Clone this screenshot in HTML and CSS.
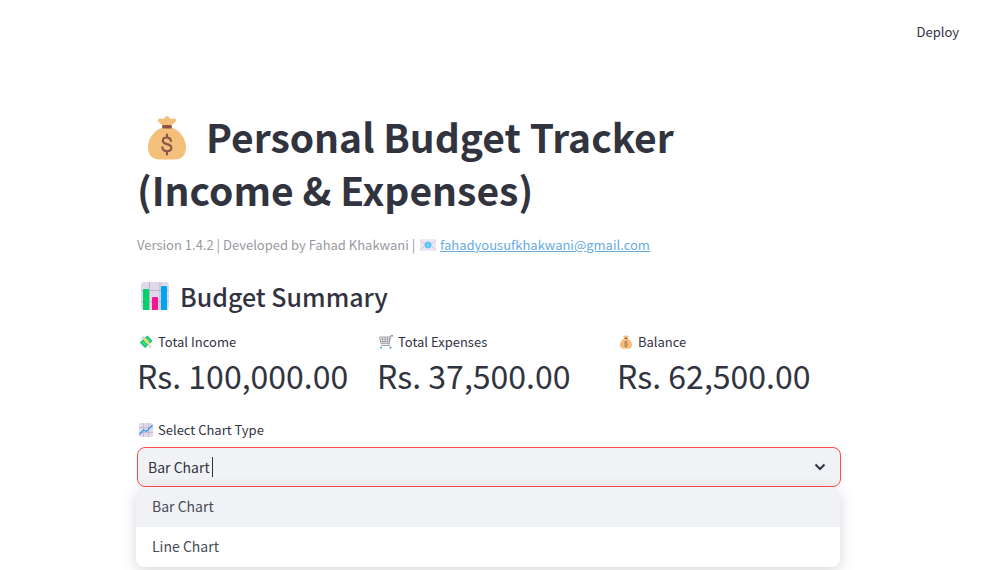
FILE: index.html
```html
<!DOCTYPE html>
<html lang="en">
<head>
<meta charset="utf-8">
<meta name="viewport" content="width=device-width, initial-scale=1">
<title>Personal Budget Tracker</title>
<link rel="stylesheet" href="styles.css">
</head>
<body>
<svg class="sprite" aria-hidden="true">
  <symbol id="money-bag" viewBox="0 0 38 44">
    <path fill="#f3bf7b" d="M15 10 12 7C9.500 6 9 3 11.500 2.500c1.500-.4 2.500.6 3.500.5 1.500 0 2-3 4-3s2.500 3 4 3c1 .1 2-.9 3.500-.5C29 3 28.500 6 26 7l-3 3zM13.500 12h11C31 14 38 22 38 31c0 8-4 12.500-12 12.500H12C4 43.500 0 39 0 31c0-9 7-17 13.500-19z"/>
    <rect x="14" y="9" width="10" height="3.500" rx="1.500" fill="#8b5748"/>
    <path d="M23 25c-.5-2.500-2-3.500-4.200-3.500-2.500 0-4 1.200-4 3.200 0 4.800 8.500 2 8.500 7 0 2.200-1.800 3.500-4.500 3.500s-4.300-1.500-4.500-4M19 18.500v3M19 35v3.500" fill="none" stroke="#8b5748" stroke-width="2.100" stroke-linecap="round"/>
  </symbol>
  <symbol id="bars" viewBox="0 0 28 28">
    <rect width="28" height="28" rx="3" fill="#e1d8ec"/>
    <path d="M0 8.500h28M0 19.500h28M8.500 0v28M19 0v28" stroke="#bcb4c8" stroke-width="1"/>
    <path d="M2 8q0-1 1-1h4q1 0 1 1v20H2z" fill="#00d26a"/>
    <path d="M11 16q0-1 1-1h4q1 0 1 1v12h-6z" fill="#f8158e"/>
    <path d="M20 5q0-1 1-1h4q1 0 1 1v23h-6z" fill="#00a6ed"/>
  </symbol>
  <symbol id="mail" viewBox="0 0 16 12">
    <rect width="16" height="12" rx="1" fill="#eee6f3"/>
    <path d="M0 1l8 7 8-7M0 11l5-5M16 11l-5-5" fill="none" stroke="#d5cbdf"/>
    <circle cx="8" cy="6" r="3.500" fill="#62c9f4"/>
    <circle cx="8" cy="6" r="1.300" fill="#aee8fb" stroke="#3ab1e7" stroke-width=".6"/>
  </symbol>
  <symbol id="wings" viewBox="0 0 14 14">
    <path d="M1 4 5 0l2 5zM9 9l4 1-2 4zM0 3l3 3M10 14l-2-4" fill="#d8dfe3"/>
    <path d="M8.500.5 13.500 6 6 13 .8 7.500z" fill="#16b66b"/>
    <path d="M8.500 2 12 6l-6 5.500L2.300 7.500z" fill="#2bdb88"/>
    <path d="M4.200 4.300 6 2.800l5 5.500-1.700 1.600z" fill="#fbdc67"/>
  </symbol>
  <symbol id="cart" viewBox="0 0 14 14">
    <path d="M.5 2h10.700L10 8.700H2zM1 4.200h9.800M1.500 6.500h9M3.300 2l.7 6.500M6 2v6.500M8.500 2 8 8.500M13.500.8h-2L10 10.500H2M10 10.500l2 2" fill="none" stroke="#989aa1" stroke-width=".9"/>
    <circle cx="2" cy="12.800" r="1" fill="#5aa8dc"/><circle cx="11.500" cy="12.800" r="1" fill="#5aa8dc"/>
    <path d="M12.300.8h1.500" stroke="#399bd5" stroke-width="1.500"/>
  </symbol>
  <symbol id="trend" viewBox="0 0 14 14">
    <rect width="14" height="14" rx="1.500" fill="#e1d8ec"/>
    <path d="M0 4.500h14M0 9.500h14M4.500 0v14M9.500 0v14" stroke="#bcb4c8" stroke-width=".8"/>
    <path d="M.5 11.500 4.500 7l3 1.500L13.500 2" fill="none" stroke="#2e9dea" stroke-width="1.300"/>
  </symbol>
</svg>

<header class="toolbar"><button type="button" class="deploy">Deploy</button></header>

<main class="content">
  <h1 class="title"><svg class="icon-title" aria-hidden="true"><use href="#money-bag"/></svg>Personal Budget Tracker (Income &amp; Expenses)</h1>
  <p class="caption">Version 1.4.2 | Developed by Fahad Khakwani | <svg class="icon-mail" aria-hidden="true"><use href="#mail"/></svg><a href="mailto:fahadyousufkhakwani@gmail.com">fahadyousufkhakwani@gmail.com</a></p>
  <h2 class="heading"><svg class="icon-heading" aria-hidden="true"><use href="#bars"/></svg>Budget Summary</h2>

  <dl class="metrics">
    <div class="metric">
      <dt class="label"><svg class="icon-small" aria-hidden="true"><use href="#wings"/></svg>Total Income</dt>
      <dd class="value">Rs. 100,000.00</dd>
    </div>
    <div class="metric">
      <dt class="label"><svg class="icon-small" aria-hidden="true"><use href="#cart"/></svg>Total Expenses</dt>
      <dd class="value">Rs. 37,500.00</dd>
    </div>
    <div class="metric">
      <dt class="label"><svg class="icon-small" aria-hidden="true"><use href="#money-bag"/></svg>Balance</dt>
      <dd class="value">Rs. 62,500.00</dd>
    </div>
  </dl>

  <label class="label" for="chart-type"><svg class="icon-small" aria-hidden="true"><use href="#trend"/></svg>Select Chart Type</label>
  <div class="combo">
    <div class="combo-box">
      <input id="chart-type" class="combo-input" type="text" role="combobox" aria-expanded="true" aria-controls="chart-options" autocomplete="off" value="Bar Chart">
      <span class="caret"></span>
      <svg class="chevron" viewBox="0 0 12 8" aria-hidden="true"><path d="M1.500 1.500 6 6l4.500-4.500"/></svg>
    </div>
    <ul class="menu" id="chart-options" role="listbox">
      <li class="option is-active" role="option" aria-selected="true">Bar Chart</li>
      <li class="option" role="option" aria-selected="false">Line Chart</li>
    </ul>
  </div>
</main>
</body>
</html>
```
FILE: styles.css
```css
* { box-sizing: border-box; }

body {
  min-height: 100vh;
  margin: 0;
  padding-right: 5px;
  background: #fff;
  color: #31333f;
  font-family: "Noto Sans CJK SC", "Noto Sans", sans-serif;
  font-size: 14px;
}

h1, h2, p, dl, dd, ul { margin: 0; padding: 0; }

.sprite { display: block; width: 0; height: 0; }

.toolbar {
  display: flex;
  justify-content: flex-end;
  padding: 20px 19px 0 0;
}

.deploy {
  padding: 0;
  border: 0;
  background: none;
  color: inherit;
  font: inherit;
  font-size: 13px;
  line-height: 24px;
}

.content {
  max-width: 736px;
  margin: 0 auto;
  padding: 66px 16px 0;
}

.title {
  padding-right: 16px;
  font-size: 39px;
  font-weight: 700;
  line-height: 53px;
}

.icon-title {
  width: 38px;
  height: 44px;
  margin: 0 20px 0 11px;
  vertical-align: -7px;
}

.caption {
  margin-top: 18px;
  color: #98999f;
  font-size: 13px;
  line-height: 21px;
}

.caption a { color: #68abdf; }

.icon-mail {
  width: 16px;
  height: 12px;
  margin: 0 4px 0 2px;
  vertical-align: -1px;
}

.heading {
  display: flex;
  align-items: center;
  gap: 11px;
  margin-top: 24px;
  padding-left: 4px;
  font-size: 25px;
  font-weight: 500;
  line-height: 34px;
}

.icon-heading { width: 28px; height: 28px; }

.metrics {
  display: grid;
  grid-template-columns: repeat(3, 1fr);
  gap: 16px;
  margin: 19px 0 22px;
}

.label {
  display: flex;
  align-items: center;
  gap: 5px;
  padding-left: 2px;
  font-size: 13px;
  line-height: 20px;
}

.icon-small { width: 14px; height: 14px; }

.value {
  font-size: 32px;
  line-height: 46px;
  white-space: nowrap;
}

.combo { position: relative; margin-top: 7px; }

.combo-box {
  display: flex;
  align-items: center;
  height: 40px;
  padding: 0 14px 0 10px;
  border: 1px solid #ff4b4b;
  border-radius: 8px;
  background: #f0f2f6;
}

.combo-input {
  field-sizing: content;
  padding: 0;
  border: 0;
  outline: 0;
  background: none;
  color: inherit;
  font: inherit;
  line-height: 24px;
}

.caret { width: 1px; height: 20px; margin-left: 2px; background: #31333f; }

.chevron { width: 12px; height: 8px; margin-left: auto; }

.chevron path { fill: none; stroke: #31333f; stroke-width: 2; }

.menu {
  position: absolute;
  z-index: 1;
  top: 100%;
  left: -1px;
  right: 1px;
  border-radius: 8px;
  overflow: hidden;
  background: #fff;
  box-shadow: 0 4px 16px rgba(0, 0, 0, 0.16);
  list-style: none;
}

.option {
  padding: 0 16px 2px;
  color: #494b56;
  line-height: 38px;
}

.option.is-active { background: #f0f2f6; }
```
